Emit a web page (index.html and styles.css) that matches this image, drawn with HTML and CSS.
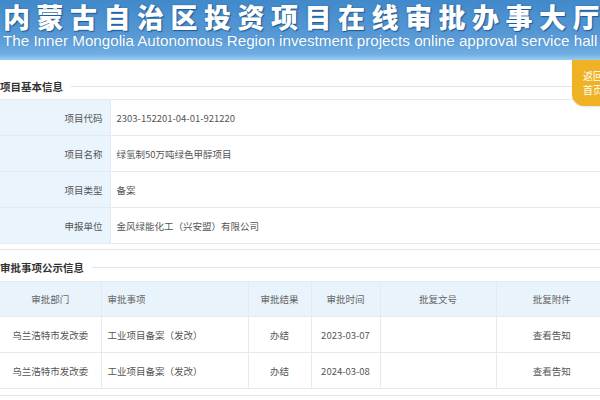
FILE: index.html
```html
<!DOCTYPE html>
<html>
  <head>
    <meta charset="utf-8">
    <title>项目详情</title>
    <link rel="stylesheet" href="styles.css">
  </head>
  <body>
    <div class="banner">
      <h1 class="banner-cn">内蒙古自治区投资项目在线审批办事大厅</h1>
      <p class="banner-en">The Inner Mongolia Autonomous Region investment projects online approval service hall</p>
    </div>
    <a class="back-home">返回<br>首页</a>

    <div class="panel">
      <div class="panel-title"><span>项目基本信息</span></div>
      <table class="info">
        <tr><td class="label">项目代码</td><td>2303-152201-04-01-921220</td></tr>
        <tr><td class="label">项目名称</td><td>绿氢制50万吨绿色甲醇项目</td></tr>
        <tr><td class="label">项目类型</td><td>备案</td></tr>
        <tr><td class="label">申报单位</td><td>金风绿能化工（兴安盟）有限公司</td></tr>
      </table>
    </div>

    <div class="panel panel-next">
      <div class="panel-title"><span>审批事项公示信息</span></div>
      <table class="list">
        <tr>
          <th class="c-dept">审批部门</th>
          <th class="c-item left">审批事项</th>
          <th class="c-res">审批结果</th>
          <th class="c-date">审批时间</th>
          <th class="c-no">批复文号</th>
          <th class="c-file">批复附件</th>
        </tr>
        <tr>
          <td>乌兰浩特市发改委</td>
          <td class="left">工业项目备案（发改）</td>
          <td>办结</td>
          <td>2023-03-07</td>
          <td></td>
          <td class="c-file">查看告知</td>
        </tr>
        <tr>
          <td>乌兰浩特市发改委</td>
          <td class="left">工业项目备案（发改）</td>
          <td>办结</td>
          <td>2024-03-08</td>
          <td></td>
          <td class="c-file">查看告知</td>
        </tr>
      </table>
    </div>
  </body>
</html>
```

FILE: styles.css
```css
* {
  box-sizing: border-box;
}

body {
  margin: 0;
  overflow: hidden;
  position: relative;
  background: #fff;
  color: #555;
  font-family: "Noto Sans CJK SC", "Liberation Sans", sans-serif;
}

.banner {
  height: 60px;
  padding: 1px 0 0 3px;
  background: linear-gradient(to bottom, #4189ca 0%, #5899d6 60%, #6eaee3 90%, #9acdf0 100%);
  overflow: hidden;
  white-space: nowrap;
}

.banner-cn {
  margin: 0;
  font-size: 27px;
  line-height: 31px;
  font-weight: 900;
  letter-spacing: 6.5px;
  color: #fff;
  text-shadow: 1px 1px 1px #1f5a92, 0 0 2px #2c6aa6;
}

.banner-en {
  margin: 1px 0 0;
  font-family: "Liberation Sans", Arial, sans-serif;
  font-size: 15.2px;
  line-height: 16px;
  color: #fff;
  text-shadow: 0 0 1px #3b7dbd;
}

.back-home {
  position: absolute;
  top: 60px;
  left: 572px;
  width: 40px;
  height: 46px;
  padding: 9px 0 0 11px;
  background: #efb224;
  border-radius: 0 0 0 12px;
  color: #fff;
  font-size: 10px;
  line-height: 14px;
  box-shadow: 0 1px 2px rgba(0,0,0,0.1);
}

.panel {
  padding: 19px 0 5px;
  border-bottom: 1px solid #e3e6ea;
}

.panel-next {
  padding-top: 10px;
  padding-bottom: 6px;
}

.panel-title {
  display: flex;
  align-items: center;
  height: 14px;
  margin-bottom: 6px;
  font-size: 10.5px;
  font-weight: bold;
  color: #333;
}

.panel-next .panel-title {
  margin-bottom: 7px;
}

.panel-title::after {
  content: "";
  flex: 1;
  height: 1px;
  margin-left: 8px;
  background: #e1e4e8;
}

table {
  width: 100%;
  border-collapse: collapse;
  font-size: 9.5px;
  color: #555;
}

td, th {
  border: 1px solid #e6e9ed;
  font-weight: normal;
}

tr > :first-child {
  border-left: none;
}

tr > :last-child {
  border-right: none;
}

.info td {
  height: 36px;
  padding: 0 6px;
  background: #fff;
}

.info .label {
  width: 110px;
  padding-right: 7px;
  text-align: right;
  background: #e9f4fc;
}

.list th {
  height: 35px;
  background: #e8f3fb;
  color: #666;
}

.list td {
  height: 36px;
  text-align: center;
  background: #fff;
}

.list .left {
  padding-left: 6px;
  text-align: left;
}

.c-dept { width: 101px; }
.c-item { width: 147px; }
.c-res { width: 63px; }
.c-date { width: 69px; }
.c-no { width: 116px; }

.list .c-file {
  padding-left: 8px;
}
```
